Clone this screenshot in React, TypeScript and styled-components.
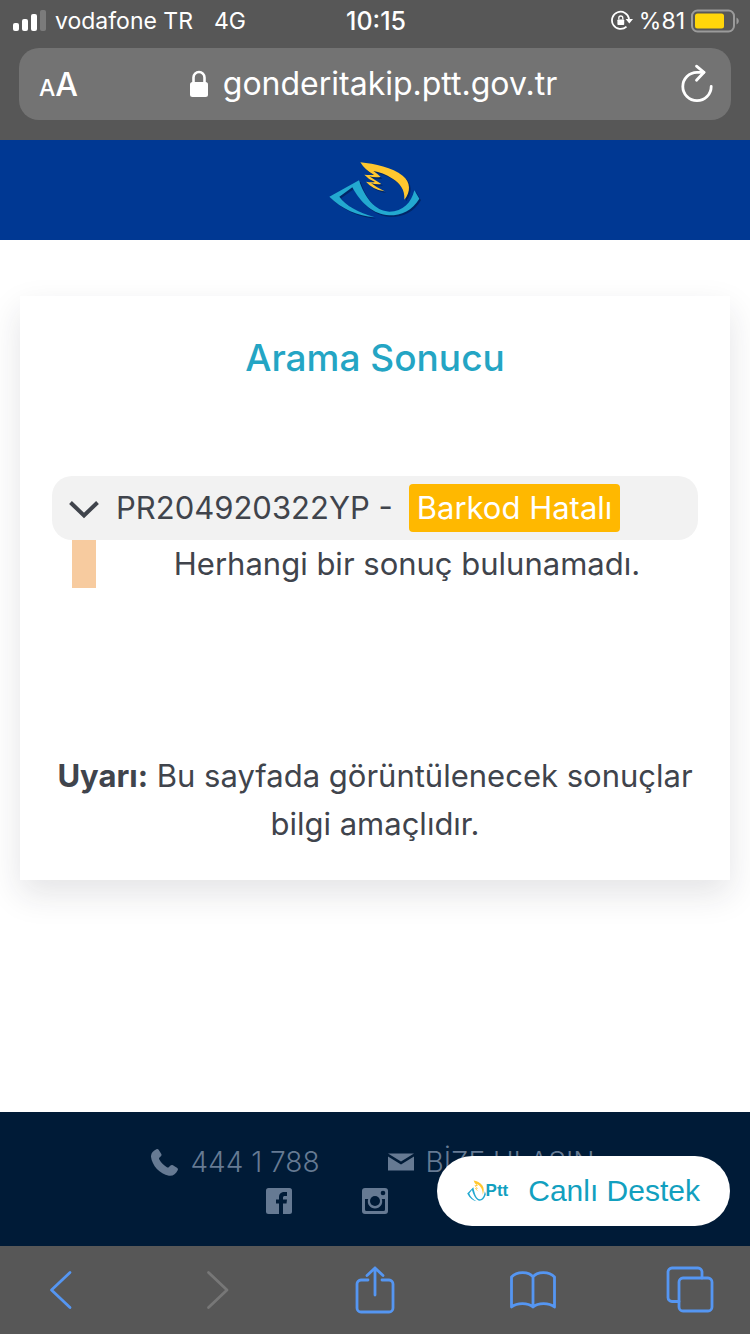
import React from "react";
import styled, { createGlobalStyle } from "styled-components";

const GlobalStyle = createGlobalStyle`
  *, *::before, *::after { box-sizing: border-box; }
  html { -webkit-text-size-adjust: 100%; }
  body {
    margin: 0;
    background: #ffffff;
    color: #40444c;
    font-family: Inter, "Liberation Sans", sans-serif;
  }
  button { border: 0; padding: 0; background: none; font: inherit; color: inherit; cursor: pointer; }
  a { color: inherit; text-decoration: none; }
  h1, p { margin: 0; }
  svg { display: block; flex: none; }
`;

const Screen = styled.div`
  min-height: 100vh;
  display: flex;
  flex-direction: column;
`;

const BrowserTop = styled.div`
  background: #575757;
  color: #ffffff;
  padding-bottom: 20px;
`;

const StatusBar = styled.div`
  height: 48px;
  padding: 0 11px 6px 13px;
  display: grid;
  grid-template-columns: 1fr auto 1fr;
  align-items: center;
  font-size: 23px;
  line-height: 28px;
`;

const StatusGroup = styled.div<{ $end?: boolean; $gap: number }>`
  display: flex;
  align-items: center;
  justify-content: ${(p) => (p.$end ? "flex-end" : "flex-start")};
  gap: ${(p) => p.$gap}px;
`;

const Network = styled.span`
  margin-left: 12px;
`;

const Clock = styled.time`
  font-size: 25px;
  font-weight: 500;
`;

const AddressBar = styled.div`
  height: 72px;
  margin: 0 19px;
  padding: 0 16px 0 20px;
  display: grid;
  grid-template-columns: 1fr auto 1fr;
  align-items: center;
  border-radius: 20px;
  background: #737373;
`;

const TextSizeButton = styled.button`
  padding-top: 4px;
  justify-self: start;
  display: flex;
  align-items: baseline;
  line-height: 40px;
  font-weight: 500;
`;

const Letter = styled.span<{ $size: number }>`
  font-size: ${(p) => p.$size}px;
`;

const UrlButton = styled.button`
  padding-right: 8px;
  display: flex;
  align-items: center;
  gap: 14px;
  font-size: 32px;
  line-height: 40px;
`;

const ReloadButton = styled.button`
  justify-self: end;
`;

const Header = styled.header`
  height: 100px;
  display: flex;
  align-items: center;
  justify-content: center;
  background: #003893;
`;

const Main = styled.main`
  flex: 1;
  padding: 56px 20px;
`;

const Card = styled.section`
  padding: 32px;
  background: #ffffff;
  box-shadow: 0 14px 32px rgba(30, 30, 50, 0.12);
  font-size: 31px;
  line-height: 48px;
`;

const Title = styled.h1`
  margin-bottom: 90px;
  padding-top: 2px;
  color: #24a5c4;
  font-size: 37px;
  line-height: 56px;
  font-weight: 500;
  text-align: center;
`;

const ResultToggle = styled.button`
  width: 100%;
  height: 64px;
  padding: 0 16px;
  display: flex;
  align-items: center;
  border-radius: 20px;
  background: #f2f2f2;
  text-align: left;
`;

const Barcode = styled.span`
  margin: 0 16px;
`;

const Badge = styled.span`
  height: 48px;
  padding: 0 8px;
  border-radius: 4px;
  background: #ffb800;
  color: #ffffff;
`;

const ResultBody = styled.div`
  padding-left: 20px;
  display: grid;
  grid-template-columns: 24px 1fr;
  gap: 20px;
  margin-bottom: 164px;
  text-align: center;
`;

const TimelineMark = styled.span`
  background: #f7cb9f;
`;

const Warning = styled.p`
  text-align: center;
`;

const Footer = styled.footer`
  position: relative;
  height: 134px;
  padding-top: 32px;
  background: #001b37;
  color: #667a93;
`;

const ContactRow = styled.div`
  padding-right: 4px;
  display: flex;
  justify-content: center;
  gap: 68px;
`;

const ContactLink = styled.a`
  display: flex;
  align-items: center;
  gap: 12px;
  font-size: 28px;
  line-height: 36px;
  font-weight: 300;
`;

const SocialRow = styled.div`
  margin-top: 8px;
  display: grid;
  grid-template-columns: repeat(3, 26px);
  justify-content: center;
  gap: 70px;
`;

const ChatButton = styled.button`
  position: absolute;
  right: 20px;
  bottom: 20px;
  height: 70px;
  padding: 0 30px;
  display: flex;
  align-items: center;
  gap: 20px;
  border-radius: 35px;
  background: #ffffff;
  color: #12a0bf;
  font-family: "Liberation Sans", Arial, sans-serif;
  font-size: 30px;
`;

const Toolbar = styled.nav`
  height: 88px;
  padding: 0 32px;
  display: flex;
  align-items: center;
  justify-content: space-between;
  background: #575757;
  color: #5596f2;
`;

const ToolButton = styled.button`
  width: 56px;
  height: 56px;
  display: flex;
  align-items: center;
  justify-content: center;
  &:disabled { color: #777777; }
`;

const SignalIcon = () => (
  <svg width="33" height="22" viewBox="0 0 33 22" fill="#fff" aria-hidden="true">
    <rect x="0" y="13" width="6" height="8" rx="2" />
    <rect x="9" y="9" width="6" height="12" rx="2" />
    <rect x="18" y="4" width="6" height="17" rx="2" />
    <rect x="27" y="0" width="6" height="21" rx="2" opacity=".22" />
  </svg>
);

const RotationLockIcon = () => (
  <svg width="22" height="22" viewBox="0 0 22 22" fill="none" aria-hidden="true">
    <path d="M15.5 16.6A8.6 8.6 0 1 1 18.1 9" stroke="#fff" strokeWidth="1.8" />
    <path d="M14.6 9H22l-3.7 4.4z" fill="#fff" />
    <rect x="6.4" y="9.4" width="6.8" height="5.6" rx=".8" fill="#fff" />
    <path d="M7.8 9.6V8a2 2 0 0 1 4 0v1.6" stroke="#fff" strokeWidth="1.3" />
  </svg>
);

const BatteryIcon = () => (
  <svg width="48" height="24" viewBox="0 0 48 24" aria-hidden="true">
    <rect x="1" y="1.5" width="42" height="21" rx="5.5" fill="none" stroke="#9b9b9b" strokeWidth="2" />
    <rect x="4" y="4.5" width="29" height="15" rx="2.5" fill="#ffd60a" />
    <path d="M45.5 8.5c3 1.6 3 5.4 0 7z" fill="#9b9b9b" />
  </svg>
);

const LockIcon = () => (
  <svg width="20" height="28" viewBox="0 0 20 28" aria-hidden="true">
    <rect x="1" y="12" width="18" height="15" rx="2.5" fill="#fff" />
    <path d="M4.5 13V7.500a5.5 5.5 0 0 1 11 0V13" fill="none" stroke="#fff" strokeWidth="2.6" />
  </svg>
);

const ReloadIcon = () => (
  <svg width="36" height="40" viewBox="0 0 36 40" fill="none" stroke="#fff" strokeWidth="2.8" strokeLinecap="round" strokeLinejoin="round" aria-hidden="true">
    <path d="M32.2 22.5A14.2 14.2 0 1 1 18 8.3h7" />
    <path d="M17.5 2.2l7.5 6.1-7.500 8" />
  </svg>
);

const wing =
  "M151 37C195 41 247 53 278 77C302 96 303 125 283 149C285 118 270 100 248 86C228 73 208 66 190 63Q202 71 212 81Q192 83 178 79Q197 92 214 102Q197 104 183 99Q200 113 224 124Q188 119 168 95Q184 98 195 96Q176 89 163 74Q181 76 192 74Q166 62 151 37Z";
const body =
  "M58 140L147 91C164 142 195 184 238 185C279 185 304 158 313 121L328 146C307 181 275 196 238 196C190 194 153 160 127 112L88 140C107 167 145 187 193 201C145 198 94 177 58 140Z";

const PttBird = ({ width, height, shadow }: { width: number; height: number; shadow?: boolean }) => (
  <svg width={width} height={height} viewBox={shadow ? "0 0 390 240" : "55 34 275 172"} preserveAspectRatio="none" aria-hidden="true">
    {shadow && (
      <g fill="#021f57" opacity=".7" transform="translate(5 5)">
        <path d={wing} />
        <path d={body} />
      </g>
    )}
    <path fill="#ffc72f" d={wing} />
    <path fill="#23a9d0" d={body} />
  </svg>
);

const PttWord = styled.span`
  display: flex;
  align-items: center;
  font-size: 17px;
  font-weight: 700;
  line-height: 24px;
`;

const ChevronDown = () => (
  <svg width="32" height="32" viewBox="0 0 32 32" fill="none" stroke="#40444c" strokeWidth="4" aria-hidden="true">
    <path d="M2.500 10.500L16 23.500l13.500-13" />
  </svg>
);

const PhoneIcon = () => (
  <svg width="27" height="27" viewBox="0 0 26 26" fill="currentColor" aria-hidden="true">
    <path d="M5.200.3c1-.5 1.700-.3 2.300.6l2.300 3.600c.6 1 .5 1.700-.3 2.400L8.200 8.200c-.6.600-.6 1.200-.2 2 1.700 3.200 4.100 5.500 7.300 7.300.8.400 1.400.4 2-.2l1.500-1.400c.7-.7 1.400-.8 2.300-.2l3.900 2.400c1 .6 1.200 1.300.7 2.300-1.700 3.700-4.700 5.900-8.500 5.300C8.600 24.500.9 15.700 0 7.500-.2 4.300 2 1.800 5.200.3z" />
  </svg>
);

const MailIcon = () => (
  <svg width="26" height="18" viewBox="0 0 26 18" fill="currentColor" aria-hidden="true">
    <path d="M0 .5h26L13 8.500z" />
    <path d="M0 3.400l13 8 13-8V17.500H0z" />
  </svg>
);

const FacebookIcon = () => (
  <svg width="26" height="26" viewBox="0 0 26 26" aria-hidden="true">
    <rect width="26" height="26" rx="2.5" fill="currentColor" />
    <path d="M13 26V15.500h-3v-4h3V9.300C13 5.500 15.300 4 18.500 4H21v4h-2c-1.500 0-2 .6-2 1.900v1.600h4l-.5 4H17V26z" fill="#001b37" />
  </svg>
);

const InstagramIcon = () => (
  <svg width="26" height="26" viewBox="0 0 26 26" aria-hidden="true">
    <rect width="26" height="26" rx="3" fill="currentColor" />
    <path d="M3 11h3.200a7.200 7.200 0 1 0 13.600 0H23v10.500a1.500 1.500 0 0 1-1.500 1.500h-17A1.500 1.500 0 0 1 3 21.500z" fill="#001b37" />
    <circle cx="13" cy="13" r="5" fill="#001b37" />
    <circle cx="21" cy="5" r="2.3" fill="#001b37" />
  </svg>
);

const line = {
  fill: "none",
  stroke: "currentColor",
  strokeWidth: 2.8,
  strokeLinecap: "round" as const,
  strokeLinejoin: "round" as const,
  "aria-hidden": true,
};

const BackIcon = () => (
  <svg width="48" height="48" viewBox="0 0 48 48" {...line}>
    <path d="M34 6.500L15.500 24 34 41.500" />
  </svg>
);

const ForwardIcon = () => (
  <svg width="48" height="48" viewBox="0 0 48 48" {...line}>
    <path d="M14.500 6.500L33 24 14.500 41.500" />
  </svg>
);

const ShareIcon = () => (
  <svg width="48" height="48" viewBox="0 0 48 48" {...line}>
    <path d="M17 14h-7a4 4 0 0 0-4 4v24a4 4 0 0 0 4 4h28a4 4 0 0 0 4-4V18a4 4 0 0 0-4-4h-7" />
    <path d="M24 29V2M16 9.500L24 2l8 7.500" />
  </svg>
);

const BookIcon = () => (
  <svg width="48" height="48" viewBox="0 0 48 48" {...line}>
    <path d="M24 11c-4-5.500-16-6-21.500 0v30c5.500-4.500 16.500-4.500 21.500 0 5-4.500 16-4.500 21.500 0V11C40 5 28 5.500 24 11zM24 11v30" />
  </svg>
);

const TabsIcon = () => (
  <svg width="48" height="48" viewBox="0 0 48 48" {...line}>
    <rect x="13" y="12" width="33" height="33" rx="4" />
    <path d="M13 35.500H6a4 4 0 0 1-4-4V6a4 4 0 0 1 4-4h26a4 4 0 0 1 4 4v6" />
  </svg>
);

export default function App() {
  const [open, setOpen] = React.useState(true);

  return (
    <Screen>
      <GlobalStyle />
      <BrowserTop>
        <StatusBar>
          <StatusGroup $gap={9}>
            <SignalIcon />
            <span>vodafone TR</span>
            <Network>4G</Network>
          </StatusGroup>
          <Clock>10:15</Clock>
          <StatusGroup $end $gap={6}>
            <RotationLockIcon />
            <span>%81</span>
            <BatteryIcon />
          </StatusGroup>
        </StatusBar>
        <AddressBar>
          <TextSizeButton>
            <Letter $size={23}>A</Letter>
            <Letter $size={32}>A</Letter>
          </TextSizeButton>
          <UrlButton>
            <LockIcon />
            <span>gonderitakip.ptt.gov.tr</span>
          </UrlButton>
          <ReloadButton aria-label="Yenile">
            <ReloadIcon />
          </ReloadButton>
        </AddressBar>
      </BrowserTop>

      <Header>
        <a href="#" aria-label="PTT">
          <PttBird width={130} height={80} shadow />
        </a>
      </Header>

      <Main>
        <Card>
          <Title>Arama Sonucu</Title>
          <ResultToggle aria-expanded={open} onClick={() => setOpen(!open)}>
            <ChevronDown />
            <Barcode>PR204920322YP -</Barcode>
            <Badge>Barkod Hatalı</Badge>
          </ResultToggle>
          {open && (
            <ResultBody>
              <TimelineMark />
              <p>Herhangi bir sonuç bulunamadı.</p>
            </ResultBody>
          )}
          <Warning>
            <strong>Uyarı:</strong> Bu sayfada görüntülenecek sonuçlar bilgi amaçlıdır.
          </Warning>
        </Card>
      </Main>

      <Footer>
        <ContactRow>
          <ContactLink href="tel:4441788">
            <PhoneIcon />
            444 1 788
          </ContactLink>
          <ContactLink href="#iletisim">
            <MailIcon />
            BİZE ULAŞIN
          </ContactLink>
        </ContactRow>
        <SocialRow>
          <a href="#facebook" aria-label="Facebook">
            <FacebookIcon />
          </a>
          <a href="#instagram" aria-label="Instagram">
            <InstagramIcon />
          </a>
        </SocialRow>
        <ChatButton>
          <PttWord>
            <PttBird width={19} height={22} />
            Ptt
          </PttWord>
          Canlı Destek
        </ChatButton>
      </Footer>

      <Toolbar>
        <ToolButton aria-label="Geri">
          <BackIcon />
        </ToolButton>
        <ToolButton aria-label="İleri" disabled>
          <ForwardIcon />
        </ToolButton>
        <ToolButton aria-label="Paylaş">
          <ShareIcon />
        </ToolButton>
        <ToolButton aria-label="Yer İmleri">
          <BookIcon />
        </ToolButton>
        <ToolButton aria-label="Sekmeler">
          <TabsIcon />
        </ToolButton>
      </Toolbar>
    </Screen>
  );
}
